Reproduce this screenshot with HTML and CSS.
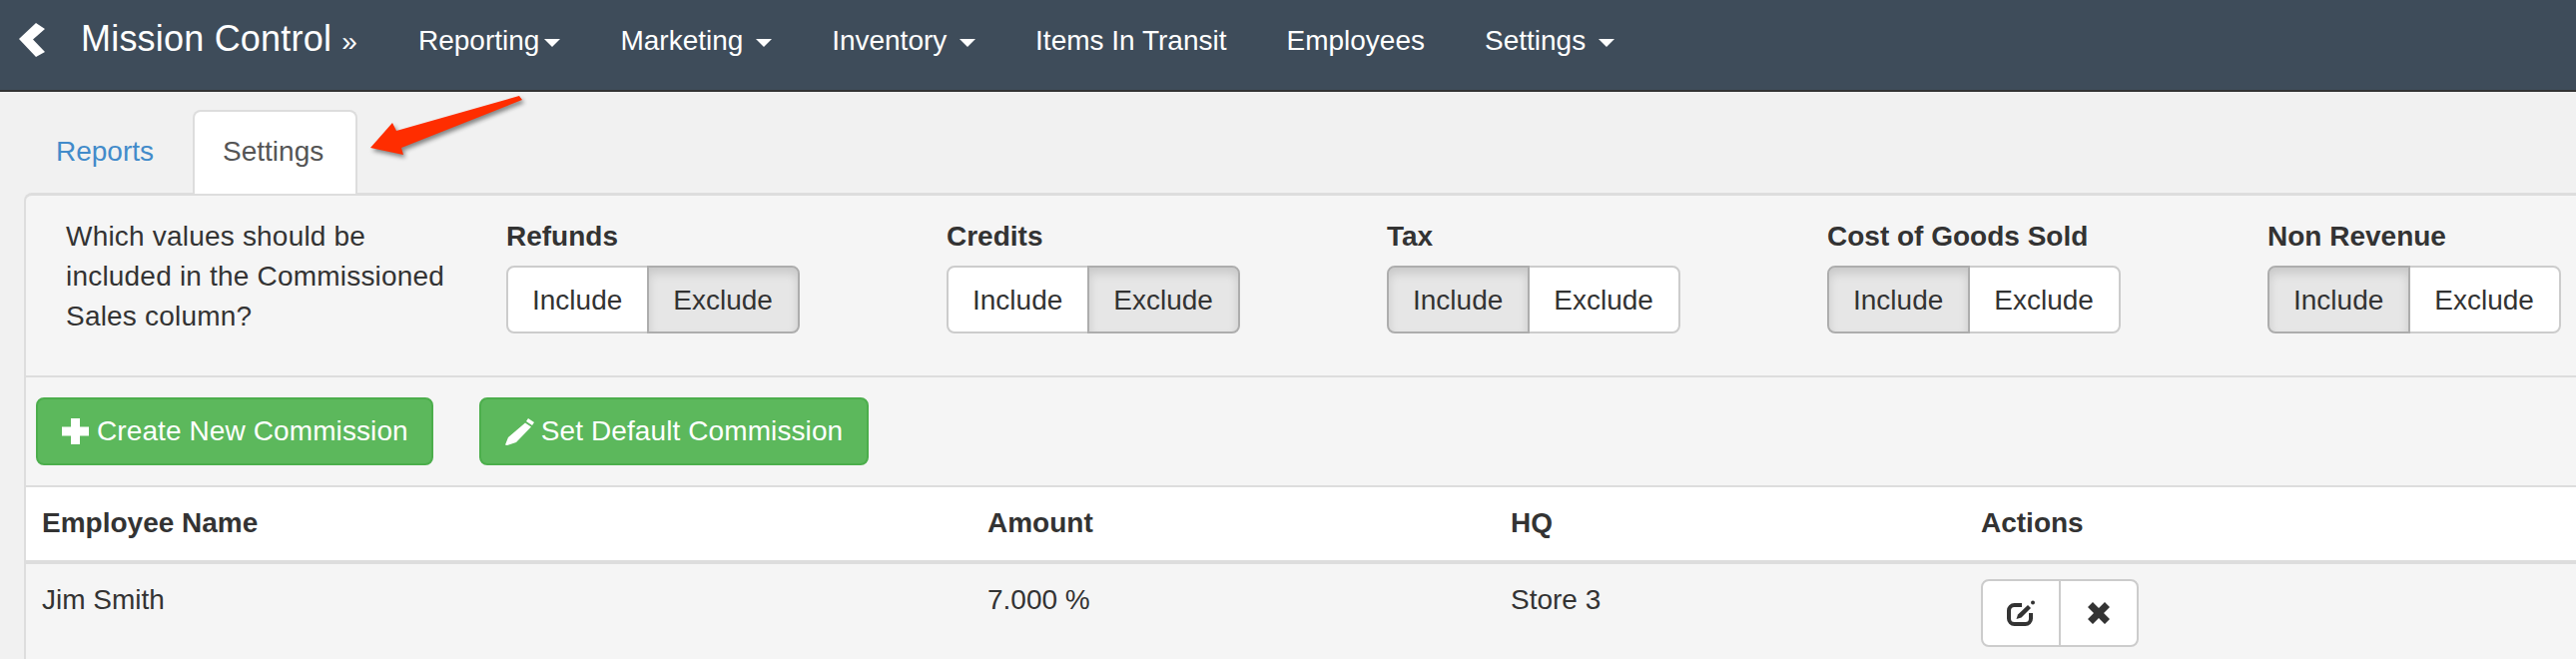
FILE: index.html
```html
<!DOCTYPE html>
<html lang="en">
<head>
<meta charset="utf-8">
<title>Mission Control</title>
<link rel="stylesheet" href="styles.css">
</head>
<body>
<header class="navbar">
  <a class="back" href="#"><svg class="chevron" viewBox="0 0 26 34"><polygon points="0,16 17,0 26,6 14,16.5 26,29 17,34"/></svg></a>
  <a class="brand" href="#">Mission Control <span class="brand-mark">»</span></a>
  <nav class="nav">
    <a class="nav-link" href="#">Reporting<span class="caret"></span></a>
    <a class="nav-link" href="#">Marketing <span class="caret"></span></a>
    <a class="nav-link" href="#">Inventory <span class="caret"></span></a>
    <a class="nav-link" href="#">Items In Transit</a>
    <a class="nav-link" href="#">Employees</a>
    <a class="nav-link" href="#">Settings <span class="caret"></span></a>
  </nav>
</header>

<main class="content">
  <ul class="tabs">
    <li class="tab"><a class="tab-link" href="#">Reports</a></li>
    <li class="tab tab-active"><a class="tab-link" href="#">Settings</a></li>
  </ul>
  <svg class="arrow" viewBox="0 0 170 75"><polygon points="3,54 25,29 29,37 152,2 155,6 34,54 36,61"/></svg>

  <section class="panel">
    <div class="options">
      <p class="question">Which values should be included in the Commissioned Sales column?</p>
      <div class="option">
        <div class="option-label">Refunds</div>
        <div class="btn-group"><button class="btn">Include</button><button class="btn btn-on">Exclude</button></div>
      </div>
      <div class="option">
        <div class="option-label">Credits</div>
        <div class="btn-group"><button class="btn">Include</button><button class="btn btn-on">Exclude</button></div>
      </div>
      <div class="option">
        <div class="option-label">Tax</div>
        <div class="btn-group"><button class="btn btn-on">Include</button><button class="btn">Exclude</button></div>
      </div>
      <div class="option">
        <div class="option-label">Cost of Goods Sold</div>
        <div class="btn-group"><button class="btn btn-on">Include</button><button class="btn">Exclude</button></div>
      </div>
      <div class="option">
        <div class="option-label">Non Revenue</div>
        <div class="btn-group"><button class="btn btn-on">Include</button><button class="btn">Exclude</button></div>
      </div>
    </div>

    <div class="toolbar">
      <button class="btn-success btn-create"><svg class="icon-plus" viewBox="0 0 27 26"><path d="M9 0h9v8.500h9v9h-9V26H9v-8.500H0v-9h9z"/></svg>Create New Commission</button>
      <button class="btn-success"><svg class="icon-pencil" viewBox="0 0 29 27"><path d="M23 0l6 4-2 3-6-4zM20 4.500l6 4L11 24l-9 3-2-.5L3 19z"/></svg>Set Default Commission</button>
    </div>

    <table class="table">
      <colgroup><col class="col-name"><col class="col-amount"><col class="col-hq"><col></colgroup>
      <thead>
        <tr><th>Employee Name</th><th>Amount</th><th>HQ</th><th>Actions</th></tr>
      </thead>
      <tbody>
        <tr>
          <td>Jim Smith</td>
          <td>7.000 %</td>
          <td>Store 3</td>
          <td>
            <div class="btn-group">
              <button class="btn btn-icon"><svg class="icon-edit" viewBox="0 0 28 26"><path class="stroke" d="M15 5H7.500A5.500 5.500 0 0 0 2 10.500V18.500A5.500 5.500 0 0 0 7.500 24H18.500A5.500 5.500 0 0 0 24 18.500V13"/><path d="M9.500 19l1.500-4.500L21 5l3 3-9.500 9.500z"/><circle cx="26" cy="2.500" r="2"/></svg></button>
              <button class="btn btn-icon"><svg class="icon-x" viewBox="0 0 22 22"><path d="M5 0l6 6 6-6 5 5-6 6 6 6-5 5-6-6-6 6-5-5 6-6-6-6z"/></svg></button>
            </div>
          </td>
        </tr>
      </tbody>
    </table>
  </section>
</main>
</body>
</html>
```

FILE: styles.css
```css
* { box-sizing: border-box; }

html, body {
  margin: 0;
  height: 660px;
  overflow: hidden;
}

body {
  background: #f1f1f1;
  color: #333;
  font-family: "Liberation Sans", Arial, sans-serif;
  font-size: 28px;
  line-height: 40px;
}

a { text-decoration: none; }

.navbar {
  display: flex;
  align-items: flex-start;
  height: 92px;
  padding-left: 19px;
  background: #3e4c5a;
  border-bottom: 2px solid #333;
}

.back { display: block; height: 34px; margin-top: 23px; margin-right: 36px; }

.chevron { display: block; width: 26px; height: 34px; fill: #fff; }

.brand {
  width: 308px;
  padding-top: 19px;
  color: #fff;
  font-size: 36px;
  letter-spacing: .2px;
  white-space: nowrap;
}

.brand-mark { font-size: 28px; }

.nav { display: flex; }

.nav-link {
  padding: 21px 30px 0;
  color: #fff;
  white-space: nowrap;
}

.caret {
  display: inline-block;
  width: 0;
  height: 0;
  margin-left: 5px;
  vertical-align: middle;
  border-top: 8px solid #fff;
  border-left: 8px solid transparent;
  border-right: 8px solid transparent;
}

.content {
  position: relative;
  padding-top: 18px;
}

.tabs {
  display: flex;
  gap: 8px;
  margin: 0 0 0 25px;
  padding: 0;
  list-style: none;
  height: 83px;
}

.tab {
  height: 84px;
  border: 2px solid transparent;
  border-bottom: 0;
  border-radius: 8px 8px 0 0;
}

.tab-link {
  display: block;
  padding: 20px 29px;
  color: #428bca;
}

.tab-active {
  position: relative;
  z-index: 1;
  background: #fff;
  border-color: #ddd;
}

.tab-active .tab-link { color: #555; padding: 20px 32px 20px 28px; }

.arrow {
  position: absolute;
  left: 368px;
  top: 2px;
  width: 170px;
  height: 75px;
  fill: #ff2d00;
  filter: drop-shadow(2px 3px 2px rgba(0, 0, 0, .45));
}

.panel {
  margin-left: 24px;
  background: #f5f5f5;
  border-top: 3px solid #ddd;
  border-left: 2px solid #ddd;
  border-top-left-radius: 8px;
}

.options {
  display: grid;
  grid-template-columns: repeat(5, 441px) minmax(0, 1fr);
  height: 182px;
  padding: 21px 0 0 40px;
  border-bottom: 2px solid #ddd;
}

.question {
  margin: 0;
  padding-right: 30px;
  letter-spacing: .2px;
}

.option-label { font-weight: 700; white-space: nowrap; }

.btn-group { display: inline-flex; margin-top: 9px; }

.btn {
  height: 68px;
  padding: 13px 25px 11px 24px;
  background: #fff;
  border: 2px solid #ccc;
  color: #333;
  font: inherit;
  line-height: 40px;
}

.btn + .btn { margin-left: -2px; }

.btn:first-child { border-radius: 8px 0 0 8px; }

.btn:last-child { border-radius: 0 8px 8px 0; }

.btn-on {
  position: relative;
  background: #e6e6e6;
  border-color: #adadad;
  box-shadow: inset 0 6px 10px rgba(0, 0, 0, .125);
}

.toolbar {
  display: flex;
  gap: 46px;
  height: 108px;
  padding: 20px 0 0 10px;
}

.btn-success {
  display: flex;
  align-items: center;
  height: 68px;
  padding: 0 24px;
  background: #5cb85c;
  border: 2px solid #4cae4c;
  border-radius: 8px;
  color: #fff;
  font: inherit;
  letter-spacing: .1px;
  white-space: nowrap;
}

.btn-create { padding-right: 23px; }

.icon-plus { width: 27px; height: 26px; margin-right: 8px; fill: #fff; }

.icon-pencil { width: 29px; height: 27px; margin-right: 7px; fill: #fff; }

.table {
  width: 100%;
  table-layout: fixed;
  border-collapse: collapse;
}

.col-name { width: 947px; }
.col-amount { width: 524px; }
.col-hq { width: 471px; }

th, td {
  padding: 16px;
  text-align: left;
  vertical-align: top;
}

th {
  height: 76px;
  background: #fff;
  border-top: 2px solid #ddd;
  border-bottom: 4px solid #ddd;
}

td .btn-group { margin-top: -1px; }

.btn-icon {
  display: flex;
  align-items: center;
  justify-content: center;
  width: 80px;
  padding: 0;
}

.icon-edit { width: 28px; height: 26px; fill: #333; }

.icon-edit .stroke { fill: none; stroke: #333; stroke-width: 4; }

.icon-x { width: 22px; height: 22px; fill: #333; }
```
